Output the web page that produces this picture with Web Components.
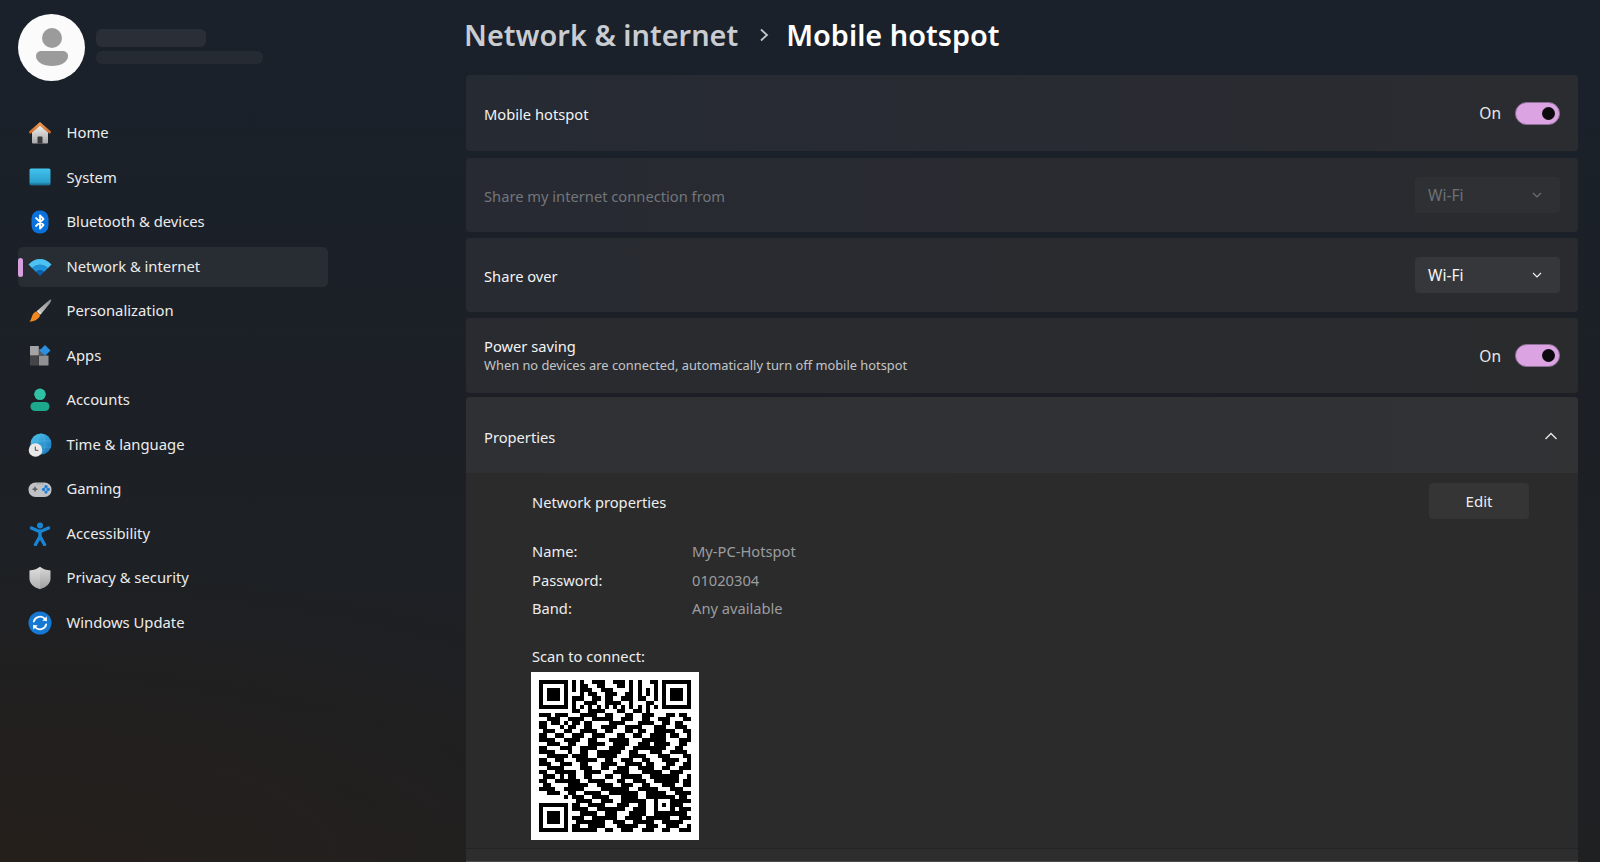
<!DOCTYPE html>
<html lang="en"><head><meta charset="utf-8"><title>Mobile hotspot</title>
<style>
html,body{margin:0;height:100%;overflow:hidden;background:#1c2027}
body{font-family:"Noto Sans","Open Sans","Liberation Sans",sans-serif;color:#f2f2f2}
</style></head><body>
<settings-app>
  <user-card slot="side"></user-card>
  <nav-item slot="side" icon="home">Home</nav-item>
  <nav-item slot="side" icon="system">System</nav-item>
  <nav-item slot="side" icon="bluetooth">Bluetooth &amp; devices</nav-item>
  <nav-item slot="side" icon="wifi" active>Network &amp; internet</nav-item>
  <nav-item slot="side" icon="brush">Personalization</nav-item>
  <nav-item slot="side" icon="apps">Apps</nav-item>
  <nav-item slot="side" icon="accounts">Accounts</nav-item>
  <nav-item slot="side" icon="time">Time &amp; language</nav-item>
  <nav-item slot="side" icon="gaming">Gaming</nav-item>
  <nav-item slot="side" icon="access">Accessibility</nav-item>
  <nav-item slot="side" icon="shield">Privacy &amp; security</nav-item>
  <nav-item slot="side" icon="update">Windows Update</nav-item>

  <page-title><span slot="parent">Network &amp; internet</span><span slot="current">Mobile hotspot</span></page-title>
  <setting-card style="height:76px;--bg:linear-gradient(90deg,#262a33,#2a2c30);margin-bottom:7px">Mobile hotspot<toggle-switch slot="action"></toggle-switch></setting-card>
  <setting-card style="height:74px;--bg:linear-gradient(90deg,#272a32,#2a2b2f);margin-bottom:6px" disabled>Share my internet connection from<drop-down slot="action" disabled>Wi-Fi</drop-down></setting-card>
  <setting-card style="height:74px;--bg:linear-gradient(90deg,#282b31,#2a2b2e);margin-bottom:6px">Share over<drop-down slot="action">Wi-Fi</drop-down></setting-card>
  <setting-card two style="height:75px;--bg:linear-gradient(90deg,#292b30,#2a2b2d);margin-bottom:4px">Power saving<span slot="sub">When no devices are connected, automatically turn off mobile hotspot</span><toggle-switch slot="action"></toggle-switch></setting-card>
  <properties-panel></properties-panel>
</settings-app>
<script>
function tpl(css, html){const t=document.createElement('template');t.innerHTML='<style>'+css+'</style>'+html;return t;}
function def(name, t, init){customElements.define(name, class extends HTMLElement{
  connectedCallback(){ if(this.shadowRoot) return; this.attachShadow({mode:'open'}).appendChild(t.content.cloneNode(true)); if(init) init.call(this); }
});}

const ICONS={
home:`<defs><linearGradient id="a" x1="0" y1="0" x2="0" y2="1"><stop offset="0" stop-color="#f0f0f0"/><stop offset="1" stop-color="#a8a8a8"/></linearGradient><linearGradient id="b" x1="0" y1="0" x2="0" y2="1"><stop offset="0" stop-color="#f2a05a"/><stop offset="1" stop-color="#c9641e"/></linearGradient></defs>
<path d="M4 11 12 4l8 7v10.500a1 1 0 0 1-1 1H5a1 1 0 0 1-1-1z" fill="url(#a)"/><path d="M9.500 22.500v-6a1 1 0 0 1 1-1h3a1 1 0 0 1 1 1v6z" fill="#3a3a3c"/><path d="M12 1 .8 10.800 2.200 13 12 4.700 21.800 13l1.400-2.200z" fill="url(#b)"/>`,
system:`<defs><linearGradient id="a" x1="0" y1="0" x2="0" y2="1"><stop offset="0" stop-color="#42c3ee"/><stop offset=".8" stop-color="#2ba0cf"/><stop offset="1" stop-color="#17617e"/></linearGradient></defs>
<rect x="1.500" y="2.500" width="21" height="17" rx="1.500" fill="url(#a)"/>`,
bluetooth:`<rect x="3.500" y="0.500" width="17" height="23" rx="8" fill="#0a72dc"/><path d="M8 8 15.500 15 12 18.500V5.500L15.500 9 8 16" fill="none" stroke="#fff" stroke-width="1.800" stroke-linejoin="round" stroke-linecap="round"/>`,
wifi:`<path d="M.5 9.500C3.500 6 7.500 4 12 4s8.500 2 11.500 5.500l-3.700 3.700A11 11 0 0 0 12 9.800a11 11 0 0 0-7.800 3.400z" fill="#4cc2f4"/><path d="M4.200 13.200A11 11 0 0 1 12 9.800a11 11 0 0 1 7.800 3.400L16 17a5.500 5.500 0 0 0-8 0z" fill="#1e93dc"/><path d="M8 17a5.500 5.500 0 0 1 8 0l-4 4z" fill="#0a5fa8"/>`,
brush:`<defs><linearGradient id="a" x1="1" y1="0" x2="0" y2="1"><stop offset="0" stop-color="#8a8a8c"/><stop offset="1" stop-color="#c8c8c8"/></linearGradient></defs><path d="M23 .5c.8.800-.5 3-2.500 5.500L13.500 14.500 10 11 18.500 3.500C20.500 1.800 22.300.0 23 .5z" fill="url(#a)"/><path d="M10.200 10.800 13.700 14.300l-1.500 1.500-3.500-3.500z" fill="#e0e0e0"/><path d="M8.800 12.600l3.300 3.300c-.6 3.400-4.800 6.600-10.800 6.600 2-1.400 2-3.600 3-6 .9-2.300 2.800-3.700 4.500-3.900z" fill="#f08a1e"/>`,
apps:`<rect x="2" y="2" width="8.800" height="9.500" fill="#a4a4a6"/><rect x="11" y="11.500" width="9.500" height="10" fill="#919193"/><rect x="2" y="12" width="8.800" height="9.500" fill="#454547"/><rect x="11" y="5" width="4" height="6.500" fill="#5a5a5c"/><path d="M17 1l5.500 5.500L17 12l-5.500-5.500z" fill="#2c8fe0"/>`,
accounts:`<circle cx="12" cy="6.300" r="5.800" fill="#30c0a4"/><rect x="2.500" y="14" width="19" height="9" rx="4.500" fill="#1ba88d"/>`,
time:`<defs><linearGradient id="a" x1="0" y1="0" x2="1" y2="1"><stop offset="0" stop-color="#4cc8f0"/><stop offset="1" stop-color="#1770b8"/></linearGradient></defs>
<circle cx="13" cy="11" r="10.500" fill="url(#a)"/><path d="M13 .5c-3 3-3.800 6.500-3.800 10.500M13 .5c3 3 4 6.500 4 10.500s-1 7.500-4 10.500M3 8h20M3 14h20" fill="none" stroke="#8ad6f4" stroke-opacity=".35" stroke-width=".6"/><circle cx="7.500" cy="17" r="6.800" fill="#e8e8e8"/><path d="M7.300 13.500v3.800h3" fill="none" stroke="#4a4a4a" stroke-width="1"/>`,
gaming:`<rect x=".5" y="5.500" width="23" height="14.500" rx="7" fill="#bfc1c5"/><path d="M7 9.800v4.800M4.600 12.200h4.800" stroke="#55585c" stroke-width="1.400"/><circle cx="18" cy="9.800" r="1.700" fill="#1a7fd8"/><circle cx="15.600" cy="12.400" r="1.700" fill="#1a7fd8"/><circle cx="20.200" cy="12.400" r="1.700" fill="#1a7fd8"/><circle cx="18" cy="15" r="1.600" fill="#1a7fd8"/><path d="M9 7h6" stroke="#8f9195" stroke-width="1" stroke-dasharray="1 1.500"/>`,
access:`<circle cx="12" cy="3.400" r="3" fill="#1a84d4"/><path d="M3.500 6 12 9.800 20.500 6M12 9v6.500M12 14.500 7.500 22.500M12 14.500l4.500 8" fill="none" stroke="#1a84d4" stroke-width="3.400" stroke-linecap="round" stroke-linejoin="round"/>`,
shield:`<defs><linearGradient id="a" x1="0" y1="0" x2="0" y2="1"><stop offset="0" stop-color="#d8d8d8"/><stop offset="1" stop-color="#a0a0a0"/></linearGradient></defs>
<path d="M12 .8c3 2.300 6.500 3.500 10.500 3.700v8c0 5-4 8.700-10.500 10.700C5.500 21.200 1.500 17.500 1.500 12.500v-8C5.500 4.300 9 3.100 12 .8z" fill="url(#a)"/><path d="M12 .8v22.400C5.500 21.200 1.500 17.500 1.500 12.500v-8C5.500 4.300 9 3.100 12 .8z" fill="#fff" fill-opacity=".18"/>`,
update:`<circle cx="12" cy="12" r="11.500" fill="#1578d2"/><path d="M5.800 10.600A6.500 6.500 0 0 1 17 8l1 1.200M18.200 13.400A6.500 6.500 0 0 1 7 16l-1-1.200" fill="none" stroke="#fff" stroke-width="1.800" stroke-linecap="round"/><path d="M18.800 5.200v4.600h-4.600zM5.200 18.800v-4.600h4.600z" fill="#fff"/>`
};

def('settings-app', tpl(`
:host{display:flex;width:1600px;height:862px;overflow:hidden;
 background:radial-gradient(800px 300px at 0 100%,#251f1b 0%,rgba(37,31,27,0) 100%),linear-gradient(180deg,#1a212b 0%,#1c2026 45%,#1f2022 100%)}
.side{box-sizing:border-box;width:466px;flex:none;padding:14px 138px 0 18px;display:flex;flex-direction:column;gap:4.500px}
.main{flex:1;min-width:0;padding-right:22px;display:flex;flex-direction:column}
`,`<div class="side"><slot name="side"></slot></div><div class="main"><slot></slot></div>`));

def('user-card', tpl(`
:host{display:flex;gap:11px;align-items:center;height:67px;margin-bottom:27.500px}
svg{width:67px;height:67px;display:block}
.l{display:flex;flex-direction:column;gap:4px;margin-top:-3px}
.a{width:110px;height:18px;border-radius:6px;background:#2a2f37}
.b{width:167px;height:13px;border-radius:6px;background:#262b33}
`,`<svg viewBox="0 0 67 67" aria-hidden="true"><circle cx="33.500" cy="33.500" r="33.500" fill="#fbfbfb"/><circle cx="34" cy="24" r="10" fill="#9b9b9b"/><path d="M24 37h20c4 0 6 2 6 5 0 6-7 10-16 10s-16-4-16-10c0-3 2-5 6-5z" fill="#9b9b9b"/></svg><div class="l"><div class="a"></div><div class="b"></div></div>`));

def('nav-item', tpl(`
:host{display:flex;align-items:center;height:40px;border-radius:5px;position:relative;padding-left:10px;gap:14.500px;font-size:14.800px;color:#ececec}
:host([active]){background:#282c33}
.bar{display:none;position:absolute;left:0;top:11px;width:4.500px;height:19px;border-radius:3px;background:#d8a0e0}
:host([active]) .bar{display:block}
svg{width:24px;height:24px;display:block;flex:none}
.x{margin-top:-2px}
`,`<span class="bar"></span><svg viewBox="0 0 24 24" aria-hidden="true"></svg><span class="x"><slot></slot></span>`),function(){
  const svg=this.shadowRoot.querySelector('svg');svg.innerHTML=ICONS[this.getAttribute('icon')]||'';
});

def('page-title', tpl(`
:host{display:flex;align-items:center;height:75px;box-sizing:border-box;padding:0 0 7px 0;font-size:28.900px;font-weight:600;color:#c9ccd1;white-space:nowrap}
svg{width:12px;height:14px;margin:2px 16px 0 20px;flex:none}
::slotted([slot=current]){color:#fff}
.p{margin-left:-2px}
`,`<span class="p"><slot name="parent"></slot></span><svg viewBox="0 0 12 14" aria-hidden="true"><path d="M3 1.500 9 7l-6 5.500" fill="none" stroke="#c4c7cc" stroke-width="1.800"/></svg><slot name="current"></slot>`));

def('setting-card', tpl(`
:host{display:flex;align-items:center;justify-content:space-between;box-sizing:border-box;padding:0 18px;border-radius:4px;background:var(--bg,#2a2c30);font-size:14.700px;color:#f4f4f4;flex:none}
:host([disabled]){color:#73767c}
.t{display:flex;flex-direction:column;line-height:19px;margin-top:3px}
:host([two]) .t{margin-top:1px}
::slotted([slot=sub]){font-size:12.850px;color:#c4c5c7}
`,`<div class="t"><span><slot></slot></span><slot name="sub"></slot></div><slot name="action"></slot>`));

def('toggle-switch', tpl(`
:host{display:flex;align-items:center;gap:14px;font-size:15.500px;color:#e8e8e8}
.s{width:45px;height:23px;border-radius:12px;background:#dba3e2;box-sizing:border-box;border:1px solid #8a7094;display:flex;align-items:center;justify-content:flex-end;padding-right:4px}
.k{width:13px;height:13px;border-radius:50%;background:#0b0b0d}
`,`<span>On</span><span class="s"><span class="k"></span></span>`));

def('drop-down', tpl(`
:host{display:flex;align-items:center;justify-content:space-between;box-sizing:border-box;width:145px;height:36px;padding:0 17px 0 13px;border-radius:4px;background:#36373b;font-size:15.500px;color:#f4f4f4}
:host([disabled]){background:#2e3034;color:#6d7076}
svg{width:12px;height:12px;display:block}
`,`<slot></slot><svg viewBox="0 0 12 12" aria-hidden="true"><path d="M2 4l4 4 4-4" fill="none" stroke="currentColor" stroke-width="1.100"/></svg>`));

def('prop-row', tpl(`
:host{display:flex;height:28.500px;align-items:center;font-size:14.700px;color:#ededed}
.k{width:160px;flex:none}
.v{color:#9c9d9f}
`,`<span class="k"><slot name="k"></slot></span><span class="v"><slot></slot></span>`));

def('qr-code', tpl(`
:host{display:block;width:168px;height:168px;box-sizing:border-box;padding:8px;background:#fff;margin-left:-1px}
svg{display:block;width:152px;height:152px;filter:blur(.35px)}
`,`<svg viewBox="0 0 37 37" shape-rendering="crispEdges" aria-hidden="true"><path fill="#000"></path></svg>`),function(){
const mid=[
"101001110011101010011","101100110001101010001","101110011100001010101","001011001110011010101",
"111001101100111011001","100111001111001000110","101010101010101010101","110011110001100110100"];
const rows=mid.map(m=>"00000000"+m+"00000000").concat([
"1110111000111100110001100111000110110",
"0011100111100111110011100110011100011",
"1101100011011000011110001111001101100",
"1100011110011001111001111000111001110",
"0111001100111100110001101100111110011",
"1100110011100111000110011001111011001",
"1111001111001100011111000111111000111",
"0011100110001111001111001110111100110",
"1100011100111100011110011111111001100",
"1111001100110011111100110001110011110",
"0011110011110011111000111100011100011",
"1100110001111100110011100110001111001",
"1110011100110001111001111011000110011",
"0011111000111001100111001111001100111",
"1100111110011110001111000111110011100",
"0111011110011000110011111001111111001",
"1100111111001111000110011100111111011",
"0110001111110011110011100110001110011",
"1111000111100001111111001111100011100",
"0011100110011110011111110011111001111",
"0000000011100111100011110011111100110",
"0000000001111001110011111100000001111",
"0000000011001111000111001100000001100",
"0000000011110011111110011100000000111",
"0000000000111100111000111100000001110",
"0000000011100111111001111011111100111",
"0000000001111111001110011111001111100",
"0000000011001111000111110011100111001",
"0000000011111100110011100111001100111"]);
const g=rows.map(r=>r.padEnd(37,'0').split('').map(Number));
function finder(x,y){for(let j=0;j<7;j++)for(let i=0;i<7;i++){const e=i==0||j==0||i==6||j==6,c=i>=2&&i<=4&&j>=2&&j<=4;g[y+j][x+i]=(e||c)?1:0;}}
finder(0,0);finder(30,0);finder(0,30);
for(let i=0;i<8;i++){g[7][i]=0;g[i][7]=0;g[7][29+i]=0;g[i][29]=0;g[29][i]=0;g[29+i][7]=0;}
for(let i=8;i<29;i++){g[6][i]=i%2?0:1;g[i][6]=i%2?0:1;}
for(let j=0;j<5;j++)for(let i=0;i<5;i++){const e=i==0||j==0||i==4||j==4;g[28+j][28+i]=(e||(i==2&&j==2))?1:0;}
let d='';g.forEach((r,y)=>r.forEach((v,x)=>{if(v)d+=`M${x} ${y}h1v1h-1z`;}));
this.shadowRoot.querySelector('path').setAttribute('d',d);
});

def('properties-panel', tpl(`
:host{display:flex;flex-direction:column;flex:1;min-height:0;font-size:14.700px;color:#efefef}
.h{flex:none;height:76px;box-sizing:border-box;padding:0 20px 0 18px;display:flex;align-items:center;justify-content:space-between;background:linear-gradient(90deg,#2e3034,#313234);border-radius:4px 4px 0 0}
.h span{margin-top:3px}
.h svg{width:14px;height:14px;margin-top:1px;display:block}
.b{flex:none;height:376px;box-sizing:border-box;background:#2b2b2c;padding:10px 49px 0 66px;border-bottom:1px solid #242424}
.top{display:flex;justify-content:space-between;align-items:center;height:36px;margin-bottom:18px}
.top span{margin-top:2px}
button{all:unset;box-sizing:border-box;width:100px;height:36px;border-radius:4px;background:#353535;color:#ececec;font:inherit;font-size:15px;text-align:center}
.scan{margin-top:19px;margin-bottom:2px;height:28px;display:flex;align-items:center}
.foot{flex:1;background:#2d2d2d;border-bottom:1px solid #4a4a4a}
`,`<div class="h"><span>Properties</span><svg viewBox="0 0 14 14" aria-hidden="true"><path d="M1.500 10 7 4.500 12.500 10" fill="none" stroke="#e6e6e6" stroke-width="1.400"/></svg></div>
<div class="b"><div class="top"><span>Network properties</span><button>Edit</button></div>
<prop-row><span slot="k">Name:</span>My-PC-Hotspot</prop-row>
<prop-row><span slot="k">Password:</span>01020304</prop-row>
<prop-row><span slot="k">Band:</span>Any available</prop-row>
<div class="scan">Scan to connect:</div><qr-code></qr-code></div><div class="foot"></div>`));
</script>
</body></html>
